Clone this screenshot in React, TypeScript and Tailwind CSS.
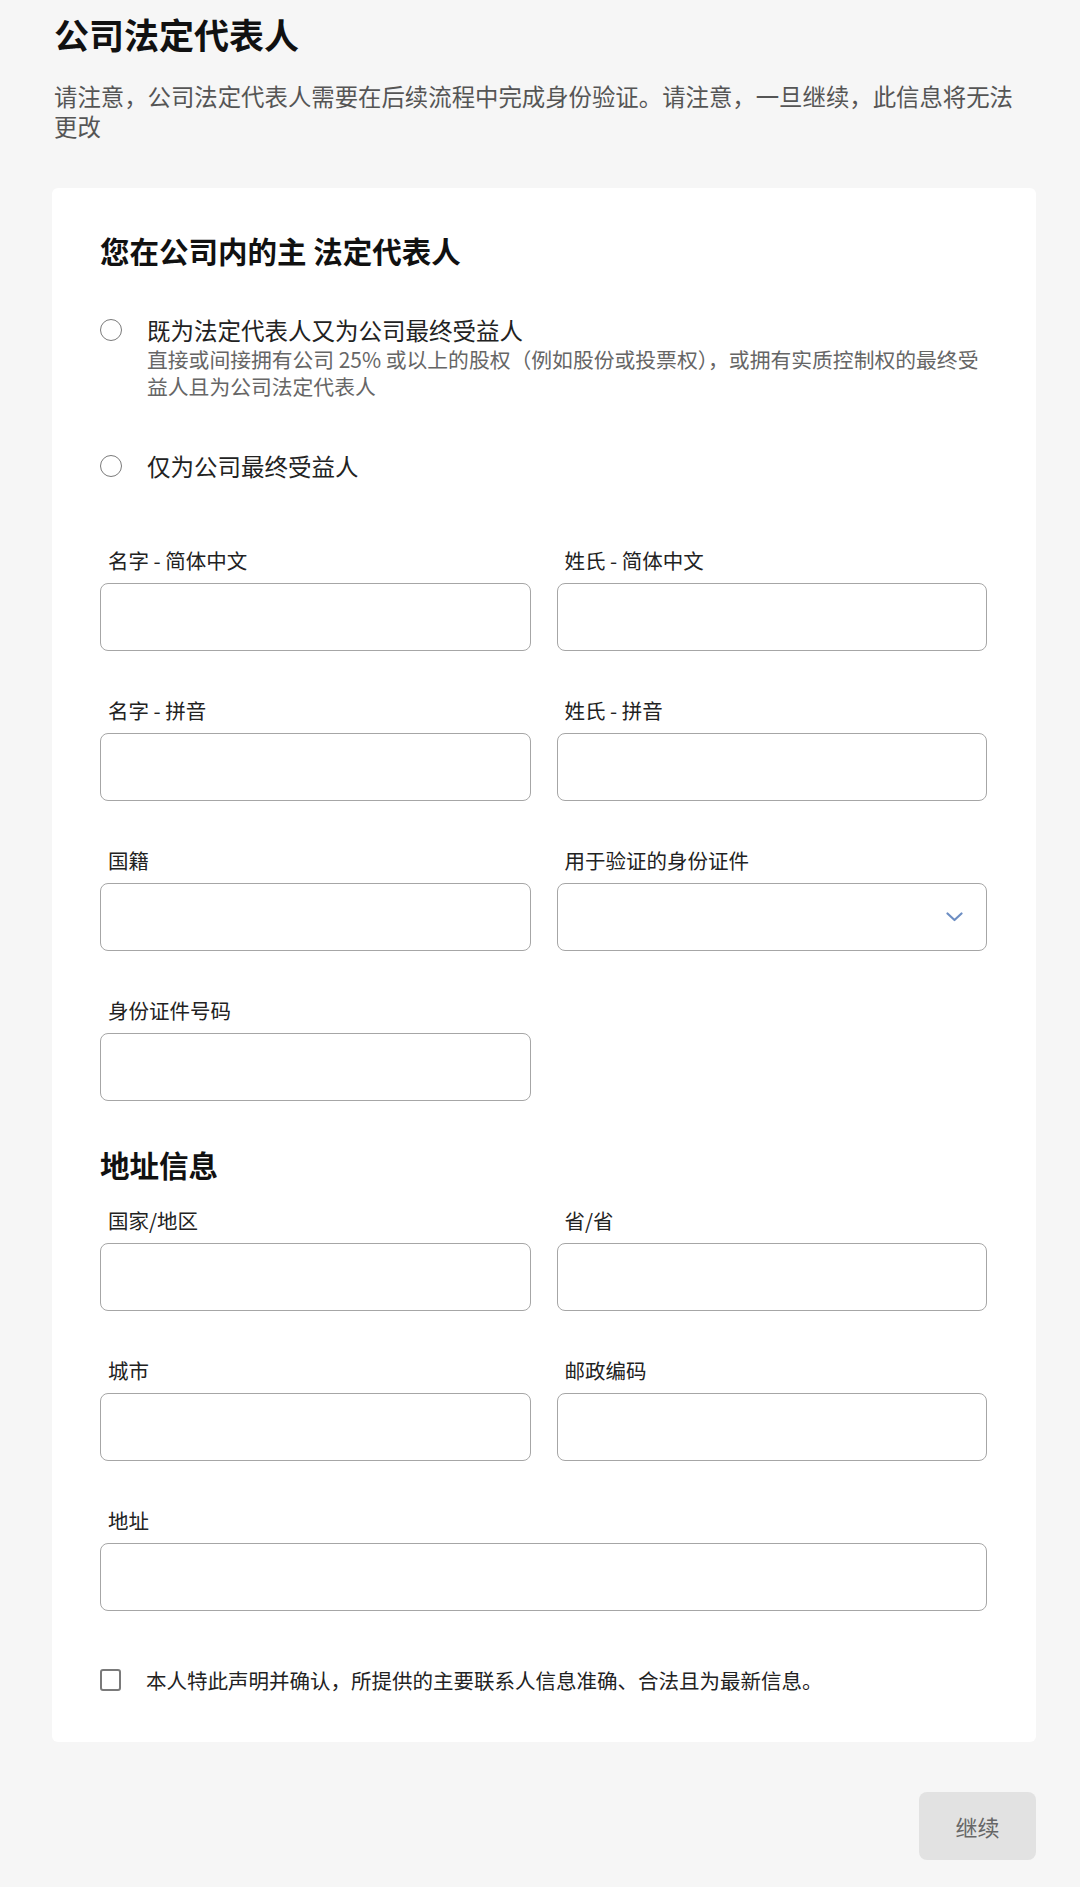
import * as React from 'react';

const font = { fontFamily: '"Noto Sans CJK SC", "Noto Sans", sans-serif' };

const inputClass = "block w-full h-[68px] bg-white border-[1.5px] border-[#a6a6a6] rounded-[8px] px-4 text-[20px] text-[#222] focus:outline-none";
const labelClass = "block pl-2 mb-[9px] text-[20.5px] leading-[28px] text-[#222]";

function Field({ label, select, className = '' }: { label: string; select?: boolean; className?: string }) {
  return (
    <div className={className}>
      <label className={labelClass}>{label}</label>
      {select ? (
        <div className="relative">
          <select className={`${inputClass} appearance-none`} defaultValue="">
            <option value="" />
          </select>
          <svg className="absolute right-[24px] top-[29px] pointer-events-none" width="17" height="10" viewBox="0 0 17 10" fill="none">
            <path d="M1.5 1.5L8.5 8L15.5 1.5" stroke="#6d8ec3" strokeWidth="2.2" strokeLinecap="round" strokeLinejoin="round" />
          </svg>
        </div>
      ) : (
        <input className={inputClass} />
      )}
    </div>
  );
}

function Radio({ label, children }: { label: string; children?: React.ReactNode }) {
  return (
    <label className="flex items-start gap-[25px] cursor-pointer">
      <span className="mt-[5px] h-[22px] w-[22px] shrink-0 rounded-full border-[1.5px] border-[#7a7a7a] bg-white" />
      <span>
        <span className="block text-[23.5px] leading-[32px] text-[#222]">{label}</span>
        {children}
      </span>
    </label>
  );
}

export default function App() {
  return (
    <div style={font} className="min-h-screen bg-[#f6f6f6] pl-[52px] pr-[44px] pt-[14px] pb-[25px]">
      {/* Header */}
      <h1 className="pl-[2px] text-[35px] leading-[40px] font-bold text-[#111]">公司法定代表人</h1>
      <p className="mt-[27px] pl-[2px] text-[23.4px] leading-[30px] text-[#555]">
        请注意，公司法定代表人需要在后续流程中完成身份验证。请注意，一旦继续，此信息将无法更改
      </p>

      {/* Form card */}
      <div className="mt-[47px] bg-white rounded-[6px] pl-[48px] pr-[49px] pt-[44px] pb-[48px]">
        <h2 className="text-[29.5px] leading-[36px] font-bold text-[#111]">您在公司内的主 法定代表人</h2>

        <div className="mt-[46px]">
          <Radio label="既为法定代表人又为公司最终受益人">
            <span className="block max-w-[840px] text-[20.8px] leading-[27px] text-[#666]">
              直接或间接拥有公司 25% 或以上的股权（例如股份或投票权），或拥有实质控制权的最终受益人且为公司法定代表人
            </span>
          </Radio>
          <div className="mt-[50px]">
            <Radio label="仅为公司最终受益人" />
          </div>
        </div>

        <div className="mt-[64px] grid grid-cols-2 gap-x-[26px] gap-y-[45px]">
          <Field label="名字 - 简体中文" />
          <Field label="姓氏 - 简体中文" />
          <Field label="名字 - 拼音" />
          <Field label="姓氏 - 拼音" />
          <Field label="国籍" />
          <Field label="用于验证的身份证件" select />
          <Field label="身份证件号码" />
        </div>

        <h2 className="mt-[45px] text-[29.5px] leading-[36px] font-bold text-[#111]">地址信息</h2>

        <div className="mt-[24px] grid grid-cols-2 gap-x-[26px] gap-y-[45px]">
          <Field label="国家/地区" />
          <Field label="省/省" />
          <Field label="城市" />
          <Field label="邮政编码" />
          <Field label="地址" className="col-span-2" />
        </div>

        <label className="mt-[55px] flex items-center gap-[25px] cursor-pointer">
          <span className="h-[22px] w-[21px] shrink-0 rounded-[3px] border-[2px] border-[#7a7a7a] bg-white" />
          <span className="text-[20.5px] leading-[28px] text-[#222]">本人特此声明并确认，所提供的主要联系人信息准确、合法且为最新信息。</span>
        </label>
      </div>

      {/* Footer */}
      <div className="mt-[50px] flex justify-end">
        <button className="h-[68px] w-[117px] rounded-[8px] bg-[#e2e2e2] text-[22px] text-[#666]">继续</button>
      </div>
    </div>
  );
}
